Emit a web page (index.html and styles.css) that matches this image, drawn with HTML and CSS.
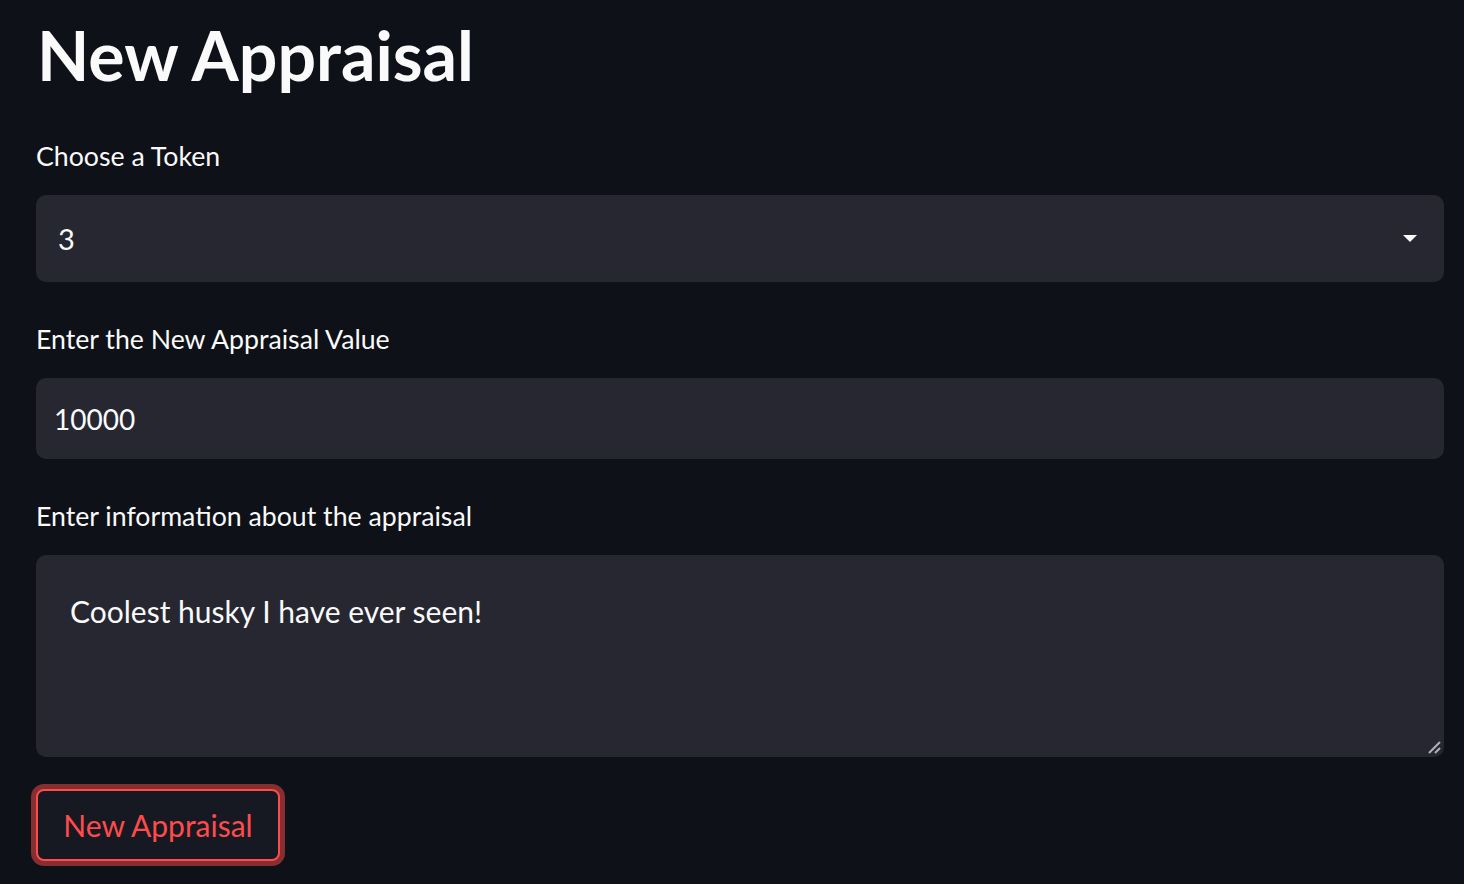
FILE: index.html
```html
<!DOCTYPE html>
<html>
<head>
<meta charset="utf-8">
<link rel="stylesheet" href="styles.css">
</head>
<body>
<main class="page">
  <h1 class="title">New Appraisal</h1>
  <div class="field">
    <label class="label">Choose a Token</label>
    <div class="box select">
      <span class="value select-value">3</span>
      <svg class="caret" width="16" height="10" viewBox="0 0 16 10"><path d="M1 1 L15 1 L8 8 Z" fill="#fafafa"/></svg>
    </div>
  </div>
  <div class="field">
    <label class="label">Enter the New Appraisal Value</label>
    <div class="box input"><span class="value">10000</span></div>
  </div>
  <div class="field">
    <label class="label">Enter information about the appraisal</label>
    <div class="box textarea">
      <span class="value">Coolest husky I have ever seen!</span>
      <svg class="grip" width="14" height="14" viewBox="0 0 14 14"><path d="M2 13 L13 2 M8 13 L13 8" stroke="#b0b0b8" stroke-width="2"/></svg>
    </div>
  </div>
  <div class="actions">
    <button class="btn">New Appraisal</button>
  </div>
</main>
</body>
</html>
```

FILE: styles.css
```css
html, body {
  margin: 0;
  padding: 0;
  background: #0e1117;
}
body {
  font-family: "Lato", "Source Sans Pro", sans-serif;
  color: #fafafa;
}
.page {
  padding: 13px 20px 0 36px;
  display: flex;
  flex-direction: column;
}
.title {
  margin: 0 0 0 1px;
  font-size: 68px;
  font-weight: 700;
  line-height: 84px;
  height: 125px;
}
.field {
  display: flex;
  flex-direction: column;
  margin-bottom: 39px;
}
.label {
  font-size: 26.7px;
  line-height: 36px;
  margin-bottom: 21px;
}
.box {
  background: #262730;
  border-radius: 10px;
  display: flex;
  align-items: center;
  position: relative;
}
.select {
  height: 87px;
  padding: 0 26px 0 22px;
  justify-content: space-between;
}
.value {
  font-size: 29px;
}
.input {
  height: 81px;
  padding-left: 18px;
}
.input .value {
  font-size: 28px;
}
.textarea {
  height: 202px;
  align-items: flex-start;
  padding: 38px 34px 0;
  box-sizing: border-box;
}
.textarea .value {
  font-size: 30px;
}
.grip {
  position: absolute;
  right: 3px;
  bottom: 3px;
}
.actions {
  margin-top: -7px;
  padding-bottom: 20px;
}
.btn {
  width: 244px;
  height: 72px;
  border: 2px solid #ff4b4b;
  border-radius: 8px;
  background: #161922;
  box-shadow: 0 0 0 5px rgba(255, 75, 75, 0.5);
  color: #ff4b4b;
  font-family: "Lato", sans-serif;
  font-size: 30px;
  padding: 0;
}
```
